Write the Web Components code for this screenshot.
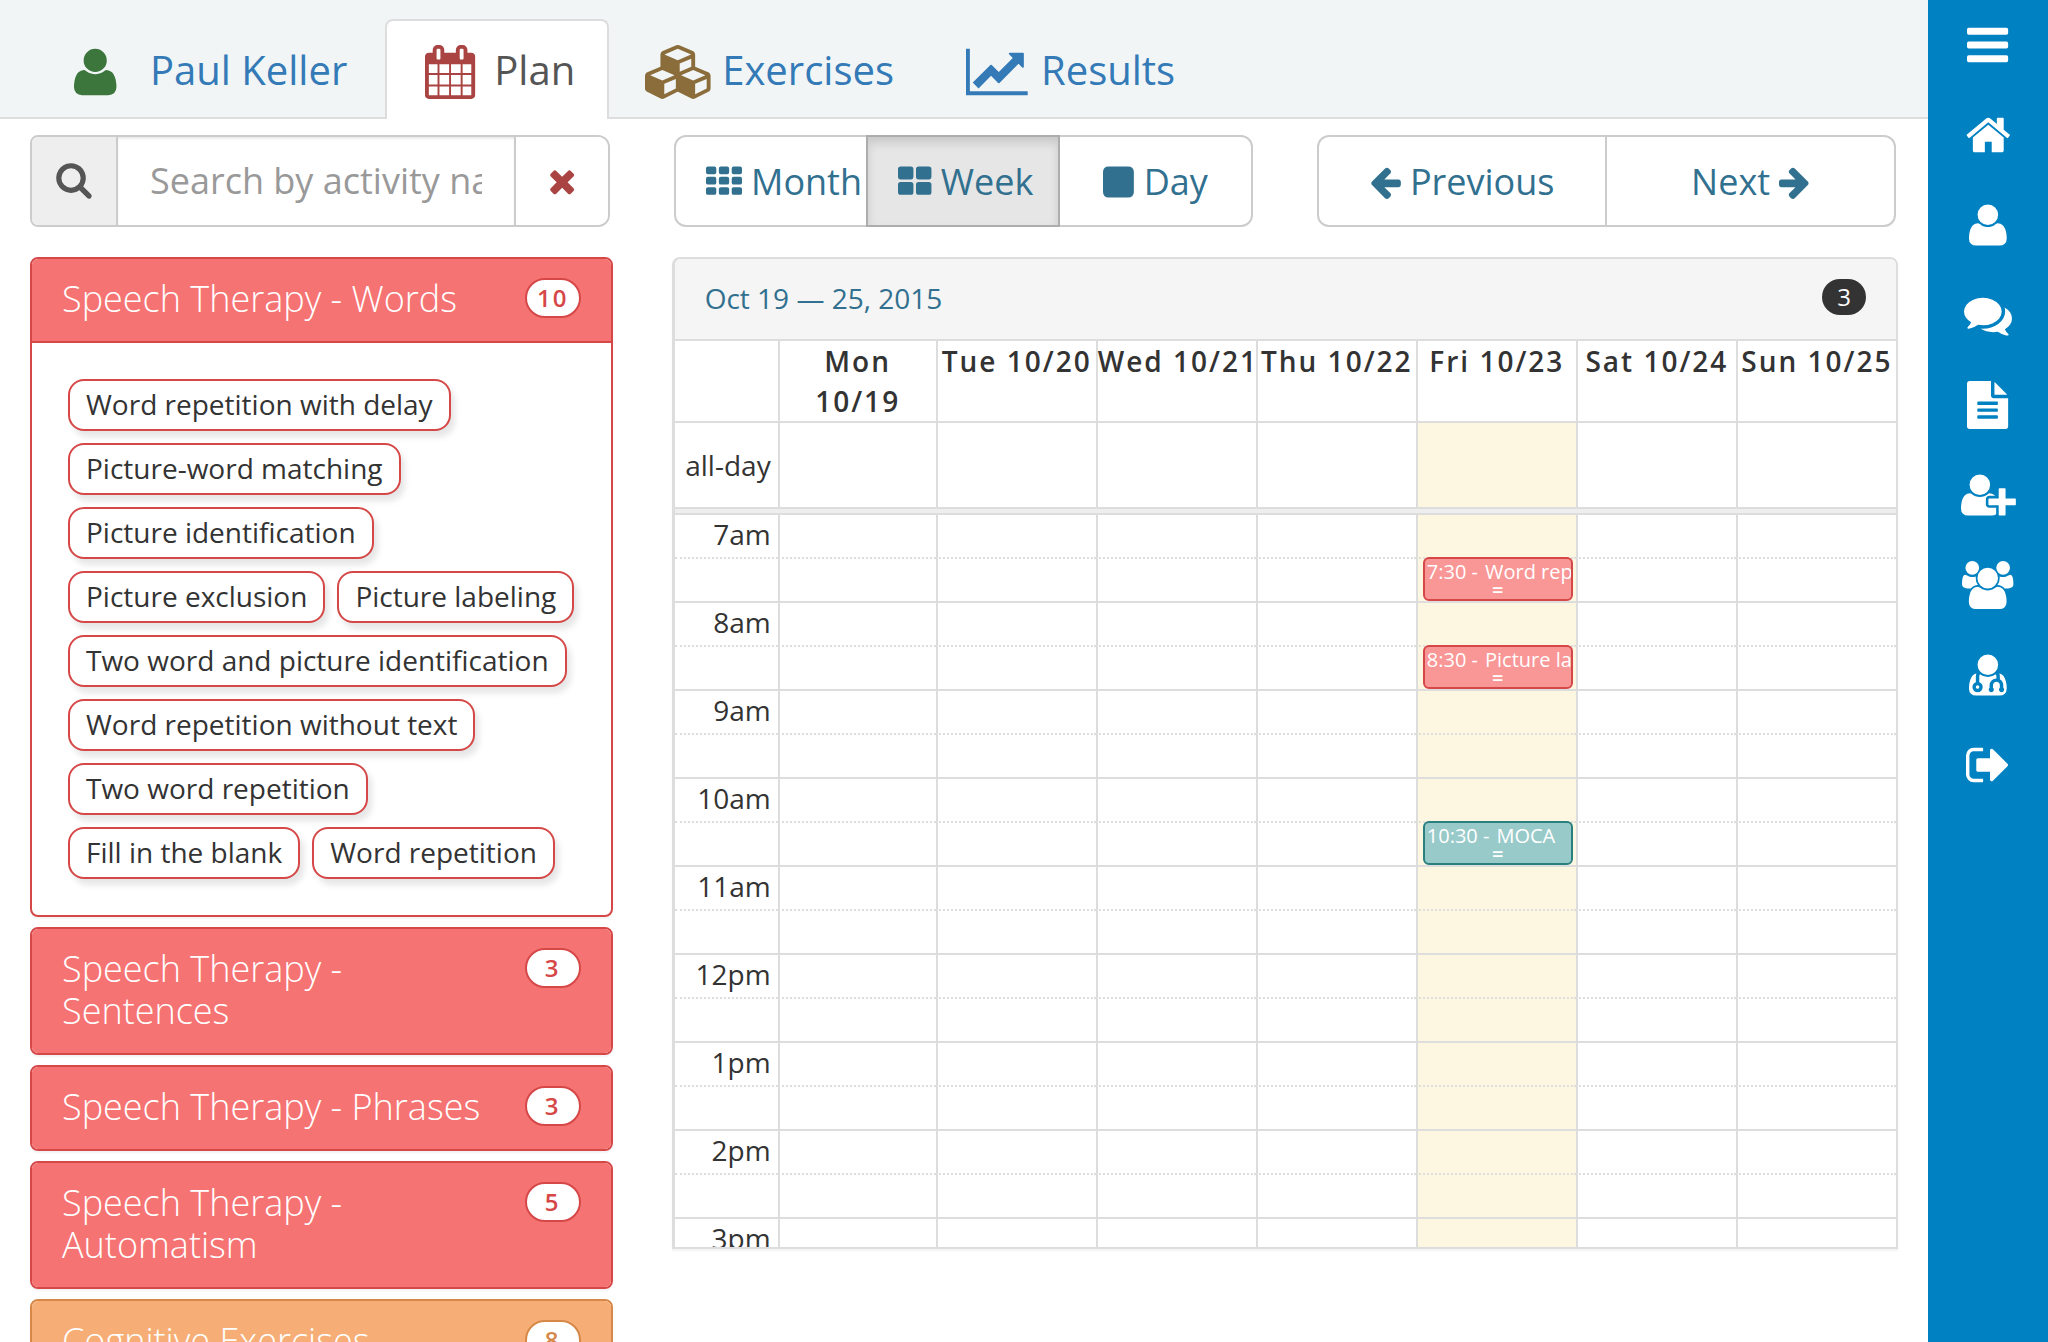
<!DOCTYPE html>
<html lang="en">
<head>
<meta charset="utf-8">
<title>Plan - Paul Keller</title>
<style>
  body {
    margin: 0;
    background: #fff;
    color: #333;
    font-family: "Open Sans", sans-serif;
    font-size: 28px;
    line-height: 40px;
  }
</style>
</head>
<body>
<therapy-app></therapy-app>

<script>
// Icon outlines: [advance width, path], in font units with y pointing up
const box = (x, y, w, h, r) =>
  `M${x + r} ${y}h${w - 2 * r}q${r} 0 ${r} ${r}v${h - 2 * r}q0 ${r} ${-r} ${r}h${2 * r - w}q${-r} 0 ${-r} ${-r}v${2 * r - h}q0 ${-r} ${r} ${-r}z`;

const grid = (cols, rows, w, h, r) => {
  let d = '';
  for (let i = 0; i < cols; i++) {
    for (let j = 0; j < rows; j++) {
      d += box(i * (w + 128), j * (h + 128), w, h, r);
    }
  }
  return d;
};

const ICONS = {
  bars: [1536, box(0, 0, 1536, 256, 64) + box(0, 512, 1536, 256, 64) + box(0, 1024, 1536, 256, 64)],
  th: [1792, grid(3, 3, 512, 384, 96)],
  thLarge: [1664, grid(2, 2, 768, 640, 128)],
  square: [1536, box(0, -128, 1536, 1536, 288)],
  home: [1664, 'M1408 544v-480q0 -26 -19 -45t-45 -19h-384v384h-256v-384h-384q-26 0 -45 19t-19 45v480q0 1 .5 3t.5 3l575 474l575 -474q1 -2 1 -6zM1631 613l-62 -74q-8 -9 -21 -11h-3q-13 0 -21 7l-692 577l-692 -577q-12 -8 -24 -7q-13 2 -21 11l-62 74q-8 10 -7 23.5t11 21.5l719 599q32 26 76 26t76 -26l244 -204v195q0 14 9 23t23 9h192q14 0 23 -9t9 -23v-408l219 -182q10 -8 11 -21.5t-7 -23.5z'],
  user: [1408, 'M1408 131q0 -120 -73 -189.5t-194 -69.5h-874q-121 0 -194 69.5t-73 189.5q0 53 3.5 103.5t14 109t26.5 108.5t43 97.5t62 81t85.5 53.5t111.5 20q9 0 42 -21.5t74.5 -48t108 -48t133.5 -21.5t133.5 21.5t108 48t74.5 48t42 21.5q61 0 111.5 -20t85.5 -53.5t62 -81t43 -97.5t26.5 -108.5t14 -109t3.5 -103.5zM1088 1024q0 -159 -112.5 -271.5t-271.5 -112.5t-271.5 112.5t-112.5 271.5t112.5 271.5t271.5 112.5t271.5 -112.5t112.5 -271.5z'],
  comments: [1792, 'M1408 768q0 -139 -94 -257t-256.5 -186.5t-353.5 -68.5q-86 0 -176 16q-124 -88 -278 -128q-36 -9 -86 -16h-3q-11 0 -20.5 8t-11.5 21q-1 3 -1 6.5t.5 6.5t2 6l2.5 5t3.5 5.5t4 5t4.5 5t4 4.5q5 6 23 25t26 29.5t22.5 29t25 38.5t20.5 44q-124 72 -195 177t-71 224q0 139 94 257t256.5 186.5t353.5 68.5t353.5 -68.5t256.5 -186.5t94 -257zM1792 512q0 -120 -71 -224.5t-195 -176.5q10 -24 20.5 -44t25 -38.5t22.5 -29t26 -29.5t23 -25q1 -1 4 -4.5t4.5 -5t4 -5t3.5 -5.5l2.5 -5t2 -6t.5 -6.5t-1 -6.5q-3 -14 -13 -22t-22 -7q-50 7 -86 16q-154 40 -278 128q-90 -16 -176 -16q-271 0 -472 132q58 -4 88 -4q161 0 309 45t264 129q125 92 192 212t67 254q0 77 -23 152q129 -71 204 -178t75 -230z'],
  file: [1536, 'M1468 1060q14 -14 28 -36h-472v472q22 -14 36 -28zM992 896h544v-1056q0 -40 -28 -68t-68 -28h-1344q-40 0 -68 28t-28 68v1600q0 40 28 68t68 28h800v-544q0 -40 28 -68t68 -28zM1152 160v64q0 14 -9 23t-23 9h-704q-14 0 -23 -9t-9 -23v-64q0 -14 9 -23t23 -9h704q14 0 23 9t9 23zM1152 416v64q0 14 -9 23t-23 9h-704q-14 0 -23 -9t-9 -23v-64q0 -14 9 -23t23 -9h704q14 0 23 9t9 23zM1152 672v64q0 14 -9 23t-23 9h-704q-14 0 -23 -9t-9 -23v-64q0 -14 9 -23t23 -9h704q14 0 23 9t9 23z'],
  userPlus: [2048, 'M704 640q-159 0 -271.5 112.5t-112.5 271.5t112.5 271.5t271.5 112.5t271.5 -112.5t112.5 -271.5t-112.5 -271.5t-271.5 -112.5zM1664 512h352q13 0 22.5 -9.5t9.5 -22.5v-192q0 -13 -9.5 -22.5t-22.5 -9.5h-352v-352q0 -13 -9.5 -22.5t-22.5 -9.5h-192q-13 0 -22.5 9.5t-9.5 22.5v352h-352q-13 0 -22.5 9.5t-9.5 22.5v192q0 13 9.5 22.5t22.5 9.5h352v352q0 13 9.5 22.5t22.5 9.5h192q13 0 22.5 -9.5t9.5 -22.5v-352zM928 288q0 -52 38 -90t90 -38h256v-238q-68 -50 -171 -50h-874q-121 0 -194 69t-73 190q0 53 3.5 103.5t14 109t26.5 108.5t43 97.5t62 81t85.5 53.5t111.5 20q19 0 39 -17q79 -61 154.5 -91.5t164.5 -30.5t164.5 30.5t154.5 91.5q20 17 39 17q132 0 217 -96h-223q-52 0 -90 -38t-38 -90v-192z'],
  users: [1920, 'M593 640q-162 -5 -265 -128h-134q-82 0 -138 40.5t-56 118.5q0 353 124 353q6 0 43.5 -21t97.5 -42.5t119 -21.5q67 0 133 23q-5 -37 -5 -66q0 -139 81 -256zM1664 3q0 -120 -73 -189.5t-194 -69.5h-874q-121 0 -194 69.5t-73 189.5q0 53 3.5 103.5t14 109t26.5 108.5t43 97.5t62 81t85.5 53.5t111.5 20q10 0 43 -21.5t73 -48t107 -48t135 -21.5t135 21.5t107 48t73 48t43 21.5q61 0 111.5 -20t85.5 -53.5t62 -81t43 -97.5t26.5 -108.5t14 -109t3.5 -103.5zM640 1280q0 -106 -75 -181t-181 -75t-181 75t-75 181t75 181t181 75t181 -75t75 -181zM1344 896q0 -159 -112.5 -271.5t-271.5 -112.5t-271.5 112.5t-112.5 271.5t112.5 271.5t271.5 112.5t271.5 -112.5t112.5 -271.5zM1920 671q0 -78 -56 -118.5t-138 -40.5h-134q-103 123 -265 128q81 117 81 256q0 29 -5 66q66 -23 133 -23q59 0 119 21.5t97.5 42.5t43.5 21q124 0 124 -353zM1792 1280q0 -106 -75 -181t-181 -75t-181 75t-75 181t75 181t181 75t181 -75t75 -181z'],
  doctor: [1408, 'M384 192q0 -26 -19 -45t-45 -19t-45 19t-19 45t19 45t45 19t45 -19t19 -45zM1408 131q0 -121 -73 -190t-194 -69h-874q-121 0 -194 69t-73 190q0 68 5.5 131t24 138t47.5 132.5t81 103t120 60.5q-22 -52 -22 -120v-203q-58 -20 -93 -70t-35 -111q0 -80 56 -136t136 -56t136 56t56 136q0 61 -35.5 111t-92.5 70v203q0 62 25 93q132 -104 295 -104t295 104q25 -31 25 -93v-64q-106 0 -181 -75t-75 -181v-89q-32 -29 -32 -71q0 -40 28 -68t68 -28t68 28t28 68q0 42 -32 71v89q0 52 38 90t90 38t90 -38t38 -90v-89q-32 -29 -32 -71q0 -40 28 -68t68 -28t68 28t28 68q0 42 -32 71v89q0 68 -34.5 127.5t-93.5 93.5q0 10 .5 42.5t0 48t-2.5 41.5t-7 47t-13 40q68 -15 120 -60.5t81 -103t47.5 -132.5t24 -138t5.5 -131zM1088 1024q0 -159 -112.5 -271.5t-271.5 -112.5t-271.5 112.5t-112.5 271.5t112.5 271.5t271.5 112.5t271.5 -112.5t112.5 -271.5z'],
  signOut: [1664, 'M640 96q0 -4 1 -20t.5 -26.5t-3 -23.5t-10 -19.5t-20.5 -6.5h-320q-119 0 -203.5 84.5t-84.5 203.5v704q0 119 84.5 203.5t203.5 84.5h320q13 0 22.5 -9.5t9.5 -22.5q0 -4 1 -20t.5 -26.5t-3 -23.5t-10 -19.5t-20.5 -6.5h-320q-66 0 -113 -47t-47 -113v-704q0 -66 47 -113t113 -47h288h11h13t11.5 -1t11.5 -3t8 -5.5t7 -9t2 -13.5zM1568 640q0 -26 -19 -45l-544 -544q-19 -19 -45 -19t-45 19t-19 45v288h-448q-26 0 -45 19t-19 45v384q0 26 19 45t45 19h448v288q0 26 19 45t45 19t45 -19l544 -544q19 -19 19 -45z'],
  calendar: [1664, 'M128 -128h288v288h-288v-288zM480 -128h320v288h-320v-288zM128 224h288v320h-288v-320zM480 224h320v320h-320v-320zM128 608h288v288h-288v-288zM864 -128h320v288h-320v-288zM480 608h320v288h-320v-288zM1248 -128h288v288h-288v-288zM864 224h320v320h-320v-320zM512 1088v288q0 13 -9.5 22.5t-22.5 9.5h-64q-13 0 -22.5 -9.5t-9.5 -22.5v-288q0 -13 9.5 -22.5t22.5 -9.5h64q13 0 22.5 9.5t9.5 22.5zM1248 224h288v320h-288v-320zM864 608h320v288h-320v-288zM1248 608h288v288h-288v-288zM1280 1088v288q0 13 -9.5 22.5t-22.5 9.5h-64q-13 0 -22.5 -9.5t-9.5 -22.5v-288q0 -13 9.5 -22.5t22.5 -9.5h64q13 0 22.5 9.5t9.5 22.5zM1664 1152v-1280q0 -52 -38 -90t-90 -38h-1408q-52 0 -90 38t-38 90v1280q0 52 38 90t90 38h128v96q0 66 47 113t113 47h64q66 0 113 -47t47 -113v-96h384v96q0 66 47 113t113 47h64q66 0 113 -47t47 -113v-96h128q52 0 90 -38t38 -90z'],
  cubes: [2176, 'M640 -96l384 192v314l-384 -164v-342zM576 358l404 173l-404 173l-404 -173zM1664 -96l384 192v314l-384 -164v-342zM1600 358l404 173l-404 173l-404 -173zM1152 651l384 165v266l-384 -164v-267zM1088 1030l441 189l-441 189l-441 -189zM2176 512v-416q0 -36 -19 -67t-52 -47l-448 -224q-25 -14 -57 -14t-57 14l-448 224q-4 2 -7 4q-2 -2 -7 -4l-448 -224q-25 -14 -57 -14t-57 14l-448 224q-33 16 -52 47t-19 67v416q0 38 21.5 70t56.5 48l434 186v400q0 38 21.5 70t56.5 48l448 192q23 10 50 10t50 -10l448 -192q35 -16 56.5 -48t21.5 -70v-400l434 -186q36 -16 57 -48t21 -70z'],
  chart: [2048, 'M2048 0v-128h-2048v1536h128v-1408h1920zM1920 1248v-435q0 -21 -19.5 -29.5t-35.5 7.5l-121 121l-633 -633q-10 -10 -23 -10t-23 10l-233 233l-416 -416l-192 192l585 585q10 10 23 10t23 -10l233 -233l464 464l-121 121q-16 16 -7.5 35.5t29.5 19.5h435q14 0 23 -9t9 -23z'],
  times: [1408, 'M1298 214q0 -40 -28 -68l-136 -136q-28 -28 -68 -28t-68 28l-294 294l-294 -294q-28 -28 -68 -28t-68 28l-136 136q-28 28 -28 68t28 68l294 294l-294 294q-28 28 -28 68t28 68l136 136q28 28 68 28t68 -28l294 -294l294 294q28 28 68 28t68 -28l136 -136q28 -28 28 -68t-28 -68l-294 -294l294 -294q28 -28 28 -68z'],
  search: [1792, 'M1357 370L1745 -19A135 135 0 0 0 1555 -209L1166 179A740 740 0 1 0 1357 370zM1227 789a480 480 0 1 0 -960 0a480 480 0 1 0 960 0z'],
  arrowLeft: [1536, 'M1536 640v-128q0 -53 -32.5 -90.5t-84.5 -37.5h-704l293 -294q38 -36 38 -90t-38 -90l-75 -76q-37 -37 -90 -37q-52 0 -91 37l-651 652q-37 37 -37 90q0 52 37 91l651 650q38 38 91 38q52 0 90 -38l75 -74q38 -38 38 -91t-38 -91l-293 -293h704q52 0 84.5 -37.5t32.5 -90.5z'],
};

class UiIcon extends HTMLElement {
  connectedCallback() {
    const [width, path] = ICONS[this.getAttribute('name')];
    this.attachShadow({ mode: 'open' }).innerHTML = `
      <style>
        :host {
          display: inline-block;
          height: 36px;
          vertical-align: -5px;
          line-height: 0;
          text-align: center;
        }

        :host([flip]) svg {
          transform: scaleX(-1);
        }

        svg {
          height: 100%;
          overflow: visible;
        }
      </style>
      <svg viewBox="0 0 ${width} 1792" aria-hidden="true">
        <path transform="translate(0 1536) scale(1 -1)" fill="currentColor" fill-rule="evenodd" d="${path}"/>
      </svg>
    `;
  }
}

class NavTab extends HTMLElement {
  connectedCallback() {
    this.attachShadow({ mode: 'open' }).innerHTML = `
      <style>
        :host {
          display: block;
          margin-bottom: -2px;
        }

        a {
          display: block;
          padding: 20px 32px 20px 30px;
          border: 2px solid transparent;
          border-bottom: 0;
          border-radius: 8px 8px 0 0;
          color: #337ab7;
          font-size: 40px;
          line-height: 57px;
          text-decoration: none;
          white-space: nowrap;
        }

        :host([active]) a {
          background: #fff;
          border-color: #ddd;
          color: #555;
        }

        ui-icon {
          width: 66px;
          height: 54px;
          margin-right: 11px;
          vertical-align: -14px;
          color: var(--icon-color, inherit);
        }

        :host([wide]) ui-icon {
          margin-right: 22px;
        }
      </style>
      <a href="#"><ui-icon name="${this.getAttribute('icon')}"></ui-icon><slot></slot></a>
    `;
  }
}

class SearchBox extends HTMLElement {
  connectedCallback() {
    this.attachShadow({ mode: 'open' }).innerHTML = `
      <style>
        :host {
          display: block;
          margin-right: 3px;
        }

        form {
          display: flex;
          height: 92px;
          box-sizing: border-box;
          border: 2px solid #ccc;
          border-radius: 8px 12px 12px 8px;
          overflow: hidden;
        }

        label {
          display: flex;
          align-items: center;
          justify-content: center;
          width: 84px;
          border-right: 2px solid #ccc;
          background: #eee;
          color: #555;
        }

        input {
          flex: 1;
          min-width: 0;
          padding: 0 32px;
          border: 0;
          outline: 0;
          background: #fff;
          box-shadow: inset 0 2px 2px rgba(0, 0, 0, 0.08);
          color: #555;
          font: inherit;
          font-size: 36px;
        }

        input::placeholder {
          color: #999;
        }

        button {
          width: 94px;
          padding: 0;
          border: 0;
          border-left: 2px solid #ccc;
          background: #fff;
          color: #a94442;
        }
      </style>
      <form>
        <label for="query" aria-label="Search"><ui-icon name="search"></ui-icon></label>
        <input id="query" type="text" placeholder="Search by activity name">
        <button type="button" aria-label="Clear"><ui-icon name="times"></ui-icon></button>
      </form>
    `;
  }
}

class ButtonGroup extends HTMLElement {
  connectedCallback() {
    this.attachShadow({ mode: 'open' }).innerHTML = `
      <style>
        :host {
          display: flex;
        }

        ::slotted(button) {
          flex: 1 1 0;
          min-width: 0;
          height: 92px;
          box-sizing: border-box;
          padding: 0 30px;
          border: 2px solid #ccc;
          background: #fff;
          color: #31708f;
          font-family: inherit;
          font-size: 36px;
          text-align: center;
          white-space: nowrap;
        }

        ::slotted(button:not(:first-child)) {
          margin-left: -2px;
        }

        ::slotted(button:first-child) {
          border-radius: 12px 0 0 12px;
        }

        ::slotted(button:last-child) {
          border-radius: 0 12px 12px 0;
        }

        ::slotted(button.active) {
          z-index: 1;
          background: #e6e6e6;
          border-color: #adadad;
          box-shadow: inset 0 6px 10px rgba(0, 0, 0, 0.125);
        }
      </style>
      <slot></slot>
    `;
  }
}

class ActivityChip extends HTMLElement {
  connectedCallback() {
    this.attachShadow({ mode: 'open' }).innerHTML = `
      <style>
        :host {
          display: block;
          padding: 3px 16px 5px;
          border: 2px solid #d64848;
          border-radius: 16px;
          background: #fff;
          box-shadow: 4px 6px 6px rgba(0, 0, 0, 0.1);
          color: #333;
          white-space: nowrap;
          cursor: move;
        }
      </style>
      <slot></slot>
    `;
  }
}

class ActivityPanel extends HTMLElement {
  connectedCallback() {
    const open = this.hasAttribute('open');
    this.attachShadow({ mode: 'open' }).innerHTML = `
      <style>
        :host {
          --fill: #f67373;
          --line: #d64848;
          display: block;
          border: 2px solid var(--line);
          border-radius: 8px;
          box-shadow: 0 2px 2px rgba(0, 0, 0, 0.05);
          overflow: hidden;
        }

        :host([kind="cognitive"]) {
          --fill: #f6ae76;
          --line: #d68848;
        }

        header {
          display: flex;
          align-items: flex-start;
          justify-content: space-between;
          gap: 30px;
          padding: 19px 30px 21px;
          background: var(--fill);
        }

        h4 {
          margin: 0;
          color: #fff;
          font-size: 36px;
          font-weight: 300;
          line-height: 42px;
        }

        .count {
          flex: none;
          width: 56px;
          box-sizing: border-box;
          border: 2px solid var(--line);
          border-radius: 20px;
          background: #fff;
          color: var(--line);
          font-size: 24px;
          font-weight: 600;
          letter-spacing: 2px;
          line-height: 36px;
          text-align: center;
        }

        .body {
          display: flex;
          flex-wrap: wrap;
          gap: 12px;
          padding: 36px;
          border-top: 2px solid var(--line);
        }
      </style>
      <header>
        <h4>${this.getAttribute('heading')}</h4>
        <span class="count">${this.getAttribute('count')}</span>
      </header>
      ${open ? '<div class="body"><slot></slot></div>' : ''}
    `;
  }
}

class CalendarEvent extends HTMLElement {
  connectedCallback() {
    this.attachShadow({ mode: 'open' }).innerHTML = `
      <style>
        :host {
          position: absolute;
          inset: -2px 3px auto 5px;
          z-index: 1;
          height: 44px;
          box-sizing: border-box;
          padding: 0 2px;
          border: 2px solid #d64848;
          border-radius: 6px;
          background: #f99696;
          color: #fff;
          font-size: 20px;
          line-height: 26px;
          white-space: nowrap;
          overflow: hidden;
        }

        :host([kind="test"]) {
          border-color: #2a7f7f;
          background: #99caca;
        }

        .title {
          margin-left: 7px;
        }

        .grip {
          font-weight: 600;
          line-height: 10px;
          text-align: center;
        }
      </style>
      <div>${this.getAttribute('time')} -<span class="title"><slot></slot></span></div>
      <div class="grip">=</div>
    `;
  }
}

class WeekCalendar extends HTMLElement {
  connectedCallback() {
    const days = ['Mon<br>10/19', 'Tue 10/20', 'Wed 10/21', 'Thu 10/22', 'Fri 10/23', 'Sat 10/24', 'Sun 10/25'];
    const today = 4;
    const hours = ['7am', '8am', '9am', '10am', '11am', '12pm', '1pm', '2pm', '3pm'];
    const events = {
      '7am': '<calendar-event time="7:30">Word repetition</calendar-event>',
      '8am': '<calendar-event time="8:30">Picture labeling</calendar-event>',
      '10am': '<calendar-event time="10:30" kind="test">MOCA</calendar-event>',
    };

    const cells = (content = '') => days
      .map((day, i) => i === today ? `<td class="today">${content}</td>` : '<td></td>')
      .join('');

    const slots = hours.map(hour => `
      <tr><th class="axis" scope="row">${hour}</th>${cells()}</tr>
      <tr class="minor"><td class="axis"></td>${cells(events[hour])}</tr>
    `).join('');

    this.attachShadow({ mode: 'open' }).innerHTML = `
      <style>
        :host {
          display: block;
          border: 2px solid #ddd;
          border-left-width: 3px;
          border-radius: 8px 8px 0 0;
          box-shadow: 0 2px 2px rgba(0, 0, 0, 0.05);
        }

        header {
          display: flex;
          align-items: flex-start;
          justify-content: space-between;
          padding: 20px 30px;
          border-radius: 6px 6px 0 0;
          background: #f5f5f5;
        }

        h4 {
          margin: 0 0 2px;
          color: #31708f;
          font-size: 28px;
          font-weight: 400;
          line-height: 38px;
        }

        .badge {
          width: 44px;
          border-radius: 18px;
          background: #333;
          color: #fff;
          font-size: 24px;
          line-height: 36px;
          text-align: center;
        }

        table {
          width: 100%;
          table-layout: fixed;
          border-collapse: separate;
          border-spacing: 0;
        }

        th,
        td {
          position: relative;
          box-sizing: border-box;
          padding: 0;
          border-top: 2px solid #ddd;
          border-left: 2px solid #ddd;
          vertical-align: top;
        }

        tr > :nth-child(2) {
          width: 158px;
        }

        thead th {
          font-weight: 600;
          letter-spacing: 2px;
          white-space: nowrap;
        }

        .axis {
          width: 103px;
          padding-right: 7px;
          border-left: 0;
          font-weight: 400;
          text-align: right;
        }

        .all-day > * {
          height: 86px;
          vertical-align: middle;
        }

        .today {
          background: #fdf7e2;
        }

        .divider {
          height: 4px;
          border-top: 2px solid #ddd;
          background: #eee;
        }

        .scroller {
          height: 734px;
          overflow: hidden;
        }

        .scroller tr {
          height: 44px;
          line-height: 38px;
        }

        .minor td {
          border-top-style: dotted;
        }
      </style>
      <header>
        <h4>Oct 19 — 25, 2015</h4>
        <span class="badge">3</span>
      </header>
      <table>
        <thead>
          <tr><td class="axis"></td>${days.map(day => `<th scope="col">${day}</th>`).join('')}</tr>
        </thead>
        <tbody>
          <tr class="all-day"><th class="axis" scope="row">all-day</th>${cells()}</tr>
        </tbody>
      </table>
      <div class="divider"></div>
      <div class="scroller">
        <table><tbody>${slots}</tbody></table>
      </div>
    `;
  }
}

class SideMenu extends HTMLElement {
  connectedCallback() {
    const links = [
      ['bars', 'Menu'],
      ['home', 'Home'],
      ['user', 'Profile'],
      ['comments', 'Messages'],
      ['file', 'Reports'],
      ['userPlus', 'Add patient'],
      ['users', 'Patients'],
      ['doctor', 'Clinicians'],
      ['signOut', 'Sign out'],
    ];
    this.attachShadow({ mode: 'open' }).innerHTML = `
      <style>
        :host {
          display: block;
          width: 120px;
          flex: none;
          background: #0081c2;
        }

        a {
          display: flex;
          align-items: center;
          justify-content: center;
          height: 90px;
          color: #fff;
        }

        ui-icon {
          height: 48px;
        }
      </style>
      <nav>
        ${links.map(([icon, label]) => `<a href="#" aria-label="${label}"><ui-icon name="${icon}"></ui-icon></a>`).join('')}
      </nav>
    `;
  }
}

class TherapyApp extends HTMLElement {
  connectedCallback() {
    this.attachShadow({ mode: 'open' }).innerHTML = `
      <style>
        :host {
          display: flex;
          height: 100vh;
          overflow: hidden;
        }

        main {
          flex: 1;
          min-width: 0;
        }

        .tabs {
          display: flex;
          gap: 4px;
          padding: 19px 30px 0;
          border-bottom: 2px solid #ddd;
          background: #f1f5f6;
        }

        .columns {
          display: grid;
          grid-template-columns: minmax(0, 1fr) minmax(0, 2fr);
        }

        .column {
          padding: 16px 30px;
        }

        .column:last-child {
          padding-left: 29px;
        }

        search-box {
          margin-bottom: 30px;
        }

        .toolbar {
          display: grid;
          grid-template-columns: minmax(0, 1fr) minmax(0, 1fr);
          gap: 64px;
          margin: 0 2px 30px;
        }

        activity-panel {
          margin-bottom: 10px;
        }
      </style>
      <main>
        <nav class="tabs">
          <nav-tab icon="user" wide style="--icon-color: #3c763d">Paul Keller</nav-tab>
          <nav-tab icon="calendar" active style="--icon-color: #a94442">Plan</nav-tab>
          <nav-tab icon="cubes" style="--icon-color: #8a6d3b">Exercises</nav-tab>
          <nav-tab icon="chart">Results</nav-tab>
        </nav>
        <div class="columns">
          <section class="column">
            <search-box></search-box>
            <activity-panel heading="Speech Therapy - Words" count="10" open>
              <activity-chip>Word repetition with delay</activity-chip>
              <activity-chip>Picture-word matching</activity-chip>
              <activity-chip>Picture identification</activity-chip>
              <activity-chip>Picture exclusion</activity-chip>
              <activity-chip>Picture labeling</activity-chip>
              <activity-chip>Two word and picture identification</activity-chip>
              <activity-chip>Word repetition without text</activity-chip>
              <activity-chip>Two word repetition</activity-chip>
              <activity-chip>Fill in the blank</activity-chip>
              <activity-chip>Word repetition</activity-chip>
            </activity-panel>
            <activity-panel heading="Speech Therapy - Sentences" count="3"></activity-panel>
            <activity-panel heading="Speech Therapy - Phrases" count="3"></activity-panel>
            <activity-panel heading="Speech Therapy - Automatism" count="5"></activity-panel>
            <activity-panel heading="Cognitive Exercises" count="8" kind="cognitive"></activity-panel>
          </section>
          <section class="column">
            <div class="toolbar">
              <button-group>
                <button type="button"><ui-icon name="th"></ui-icon> Month</button>
                <button type="button" class="active"><ui-icon name="thLarge"></ui-icon> Week</button>
                <button type="button"><ui-icon name="square"></ui-icon> Day</button>
              </button-group>
              <button-group>
                <button type="button"><ui-icon name="arrowLeft"></ui-icon> Previous</button>
                <button type="button">Next <ui-icon name="arrowLeft" flip></ui-icon></button>
              </button-group>
            </div>
            <week-calendar></week-calendar>
          </section>
        </div>
      </main>
      <side-menu></side-menu>
    `;
  }
}

customElements.define('ui-icon', UiIcon);
customElements.define('nav-tab', NavTab);
customElements.define('search-box', SearchBox);
customElements.define('button-group', ButtonGroup);
customElements.define('activity-chip', ActivityChip);
customElements.define('activity-panel', ActivityPanel);
customElements.define('calendar-event', CalendarEvent);
customElements.define('week-calendar', WeekCalendar);
customElements.define('side-menu', SideMenu);
customElements.define('therapy-app', TherapyApp);
</script>
</body>
</html>
